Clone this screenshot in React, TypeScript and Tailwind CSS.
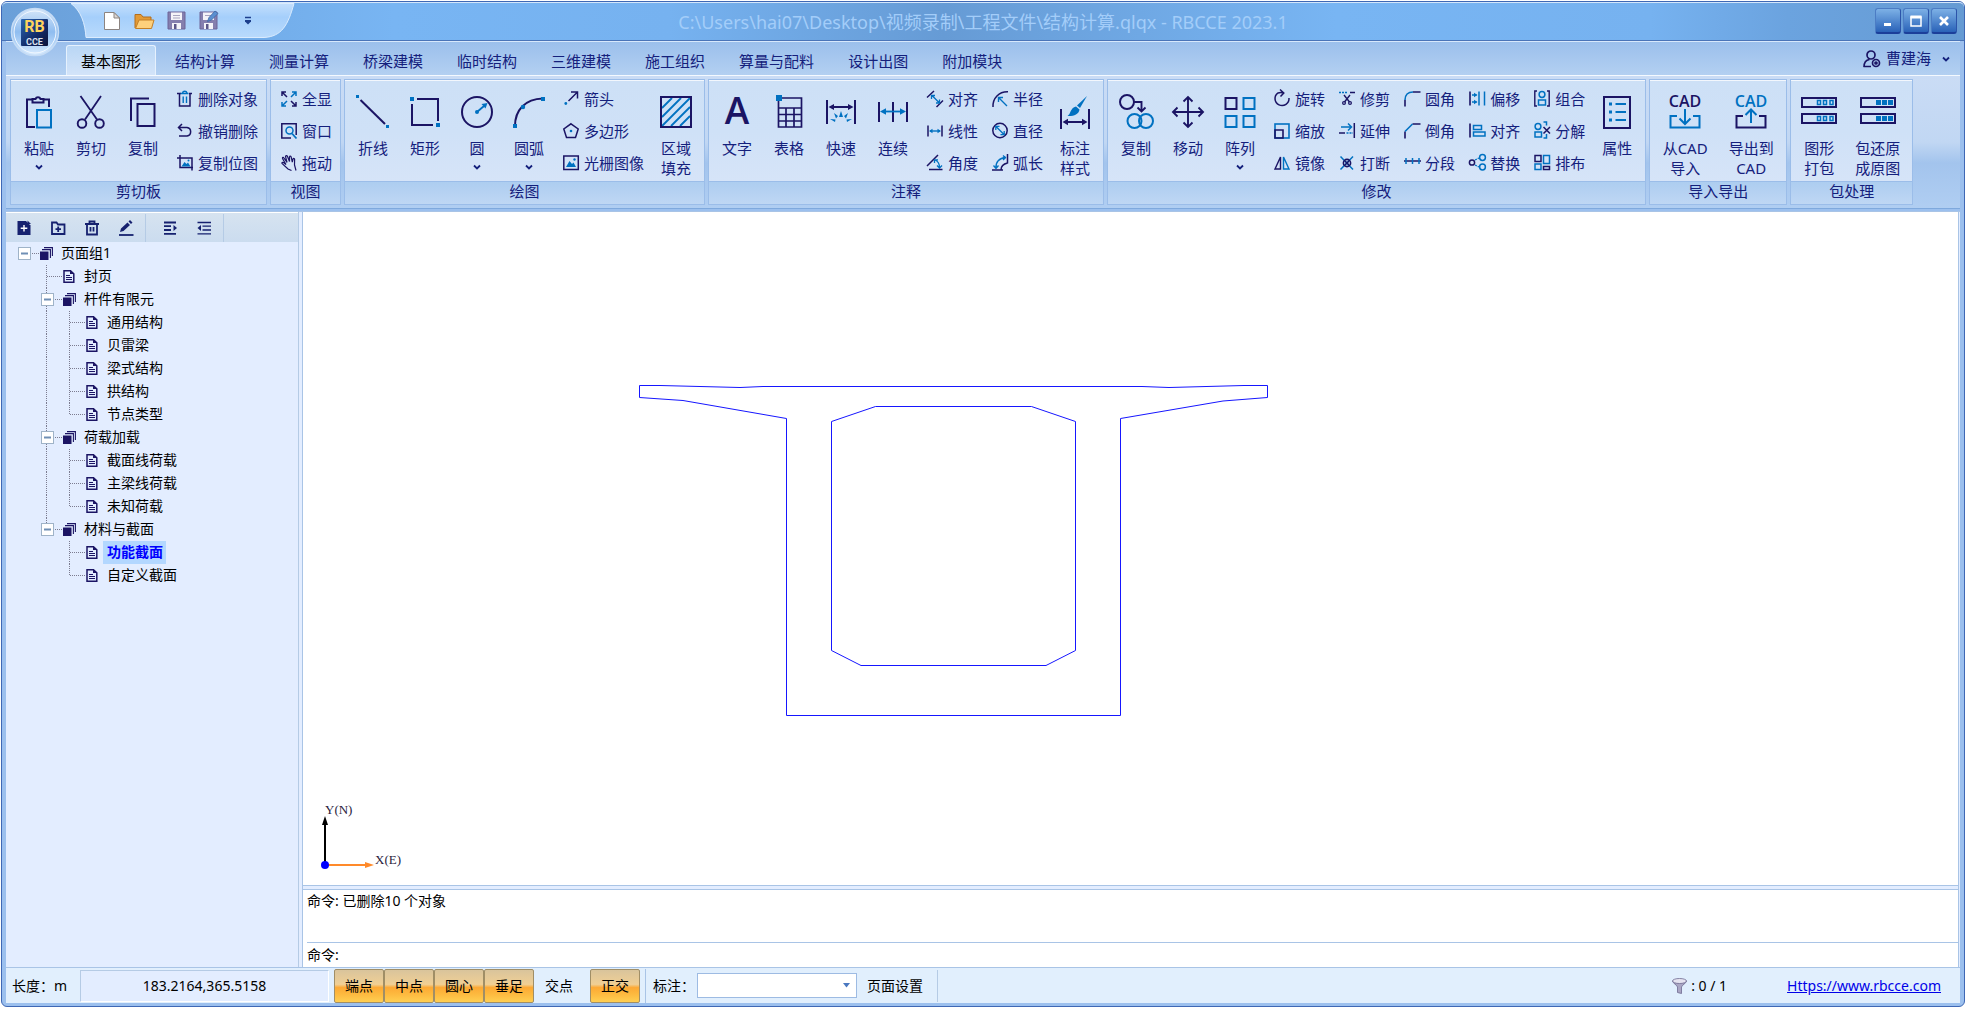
import { useState } from "react";
import type { ReactNode } from "react";

const D = "#1b1464";
const B = "#0071c1";

type IconMap = Record<string, ReactNode>;

/* 32 x 32 icons of the large ribbon buttons */
const bigIcons: IconMap = {
    paste: (
        <>
            <path d="M12 31H4V3.5H9M21 3.5H26V11" stroke={D} strokeWidth="2" />
            <path d="M9.500 6.500V3H12.500A2.700 2.700 0 0 1 17.500 3H20.500V6.500Z" stroke={D} strokeWidth="2" />
            <rect x="14" y="14" width="14" height="17.500" stroke={B} strokeWidth="2" />
        </>
    ),
    cut: (
        <>
            <path d="M5.500 0L22 23.500M26 0L10 23.500" stroke={D} strokeWidth="1.800" />
            <circle cx="7" cy="27.500" r="4.300" stroke={D} strokeWidth="1.900" />
            <circle cx="24.500" cy="27.500" r="4.300" stroke={D} strokeWidth="1.900" />
        </>
    ),
    copy: (
        <>
            <path d="M4 25V2.500H22" stroke={D} strokeWidth="2" />
            <rect x="10.500" y="8" width="17" height="22" stroke={D} strokeWidth="2" />
        </>
    ),
    polyline: (
        <>
            <path d="M3.500 4L28 28" stroke={D} strokeWidth="2" />
            <path d="M-1 -1h3v3h-3zM29 29h3v3h-3z" fill={B} />
        </>
    ),
    rect: (
        <>
            <path d="M8 3H29V25M3 8V29H24" stroke={D} strokeWidth="2" />
            <path d="M1 1h4v4h-4zM27 27h4v4h-4z" fill={B} />
        </>
    ),
    circle: (
        <>
            <circle cx="16" cy="16" r="15" stroke={D} strokeWidth="2" />
            <circle cx="16" cy="16" r="2" fill={B} />
            <path d="M16 16L23 10" stroke={B} strokeWidth="1.800" />
            <path d="M26.500 7L24.500 12.500L20.500 8Z" fill={B} />
        </>
    ),
    arc: (
        <>
            <path d="M2 30C2 14 12 3 30 2.500" stroke={D} strokeWidth="2" />
            <path d="M0 28h4v4h-4zM28 1h4v4h-4z" fill={B} />
            <circle cx="10" cy="11" r="2.200" fill={B} />
        </>
    ),
    hatch: (
        <>
            <path d="M2 12L12 2M2 21L21 2M2 30L30 2M11 30L30 11M20 30L30 20" stroke={B} strokeWidth="1.800" />
            <rect x="1" y="1" width="30" height="30" stroke={D} strokeWidth="2" />
        </>
    ),
    text: (
        <text x="16" y="28" textAnchor="middle" fill={D} fontSize="37" fontWeight="600" fontFamily="'Open Sans'">A</text>
    ),
    table: (
        <>
            <path d="M5.500 2H28.500V31H5.500ZM5.500 12H28.500M5.500 18.500H28.500M5.500 25H28.500M13 12V31M21 12V31" stroke={D} strokeWidth="1.700" />
            <path d="M3 -1h6v6h-6z" fill={B} />
        </>
    ),
    quick: (
        <>
            <path d="M2 4V28M30 4V28M6 11H26" stroke={D} strokeWidth="2" />
            <path d="M3.500 11L9 8V14ZM28.500 11L23 8V14Z" fill={D} />
            <path d="M16 15L18 21H14ZM9 17L13 20L11 22.500ZM23 17L19 20L21 22.500ZM5 23L10.500 23.500L10 26ZM27 23L21.500 23.500L22 26Z" fill={B} />
        </>
    ),
    continuous: (
        <>
            <path d="M2 6V26M16 6V26M30 6V26" stroke={D} strokeWidth="2" />
            <path d="M6 15.500H26" stroke={B} strokeWidth="1.800" />
            <path d="M3 15.500L9 12.300V18.700ZM29 15.500L23 12.300V18.700Z" fill={B} />
        </>
    ),
    dimStyle: (
        <>
            <path d="M2 13V33M30 13V33M6 26H26" stroke={D} strokeWidth="2" />
            <path d="M3.500 26L9 22.800V29.200ZM28.500 26L23 22.800V29.200Z" fill={D} />
            <path d="M28 0L21 12L18 9.500Z" fill={B} />
            <path d="M17 10.500L20.500 13.500C20 18.500 14 20.500 8.500 20C12 18 11 12 17 10.500Z" fill={B} />
        </>
    ),
    copyTo: (
        <>
            <circle cx="7" cy="6" r="7" stroke={D} strokeWidth="2" />
            <path d="M14 6H21.500V14M17.500 11.500L21.500 15.500L25.500 11.500" stroke={D} strokeWidth="1.900" />
            <circle cx="14.500" cy="25" r="7" stroke={B} strokeWidth="2" />
            <circle cx="26" cy="25" r="7" stroke={B} strokeWidth="2" />
        </>
    ),
    move: (
        <path d="M16 1V31M1 16H31M11.500 5.500L16 1L20.500 5.500M11.500 26.500L16 31L20.500 26.500M5.500 11.500L1 16L5.500 20.500M26.500 11.500L31 16L26.500 20.500" stroke={D} strokeWidth="1.900" />
    ),
    array: (
        <>
            <rect x="1.500" y="2" width="11" height="11" stroke={D} strokeWidth="2" />
            <rect x="19.500" y="2" width="11" height="11" stroke={B} strokeWidth="2" />
            <rect x="1.500" y="20" width="11" height="11" stroke={B} strokeWidth="2" />
            <rect x="19.500" y="20" width="11" height="11" stroke={B} strokeWidth="2" />
        </>
    ),
    props: (
        <>
            <rect x="3" y="1" width="26" height="31" stroke={D} strokeWidth="2" />
            <path d="M14.500 8H25M14.500 16H25M14.500 24H25" stroke={B} strokeWidth="2" />
            <path d="M8 6.500h3v3h-3zM8 14.500h3v3h-3zM8 22.500h3v3h-3z" fill={B} />
        </>
    ),
    cadIn: (
        <>
            <text x="16" y="11" textAnchor="middle" fill={D} fontSize="16" fontWeight="600" fontFamily="'Open Sans'">CAD</text>
            <path d="M8 20H1.500V31.500H30.500V20H24M16 13V28M10.500 22.500L16 28L21.500 22.500" stroke={B} strokeWidth="2" />
        </>
    ),
    cadOut: (
        <>
            <text x="16" y="11" textAnchor="middle" fill={B} fontSize="16" fontWeight="600" fontFamily="'Open Sans'">CAD</text>
            <path d="M8 20H1.500V31.500H30.500V20H24" stroke={D} strokeWidth="2" />
            <path d="M16 27V13.500M10.500 19L16 13.500L21.500 19" stroke={B} strokeWidth="2" />
        </>
    ),
    pack: (
        <>
            <path d="M-1 2H33V11H-1ZM-1 18H33V27H-1Z" stroke={D} strokeWidth="2" />
            <path d="M14.500 4.500h3v4h-3zM20.500 4.500h3v4h-3zM27 4.500h3v4h-3zM14.500 20.500h3v4h-3zM20.500 20.500h3v4h-3zM27 20.500h3v4h-3z" stroke={B} strokeWidth="1.500" />
        </>
    ),
    unpack: (
        <>
            <path d="M-1 2H33V11H-1ZM-1 18H33V27H-1Z" stroke={D} strokeWidth="2" />
            <path d="M14 4h5v5h-5zM20 4h5v5h-5zM26 4h5v5h-5zM14 20h5v5h-5zM20 20h5v5h-5zM26 20h5v5h-5z" fill={B} />
        </>
    ),
};

/* 16 x 16 icons of the small ribbon buttons */
const smallIcons: IconMap = {
    trash: (
        <>
            <path d="M0 2.500H4M12 2.500H15M2.500 2.500V15H13V2.500" stroke={D} strokeWidth="1.500" />
            <path d="M3.500 2.500H11.500M5.500 2A2.300 2.300 0 0 1 10 2M6.200 5.500V12M9.500 5.500V12" stroke={B} strokeWidth="1.400" />
        </>
    ),
    undo: <path d="M5 1L1.500 4.500L5 8M1.500 4.500H10A4.300 4.300 0 0 1 10 13H2" stroke={D} strokeWidth="1.500" />,
    copyImage: (
        <>
            <path d="M3 0V12.500H16M0 3H15V15.500" stroke={D} strokeWidth="1.500" />
            <path d="M4.500 11.500L7.500 7L9.500 9L11 7.500L13.500 11.500Z" fill={B} />
            <circle cx="11.500" cy="5.500" r="1" fill={B} />
        </>
    ),
    fitAll: (
        <>
            <path d="M1 5V1H5M1 1L6 6M15 11V15H11M15 15L10 10" stroke={D} strokeWidth="1.500" />
            <path d="M11 1H15V5M15 1L10 6M1 11V15H5M1 15L6 10" stroke={B} strokeWidth="1.500" />
        </>
    ),
    zoomWin: (
        <>
            <path d="M15.200 12V0.800H0.800V15H10" stroke={D} strokeWidth="1.500" />
            <circle cx="8.500" cy="7.500" r="3.500" stroke={B} strokeWidth="1.500" />
            <path d="M11 10.500L15.500 15.500" stroke={B} strokeWidth="1.800" />
        </>
    ),
    pan: <path d="M10.500 15.500L7 14L1 8.500C0.500 7.500 1.500 7 2.500 7.500L5 9.500L1.500 3.500C1.200 2.300 2.500 2 3 3L6 7.500L4.500 1.500C4.500 0.500 6 0.300 6.500 1.500L8.500 6.500L8.500 1.800C8.800 0.800 10 1 10.200 2L11.300 7L12 4C12.500 3 13.700 3.500 13.600 4.500L13.500 10L15 15.500" stroke={D} strokeWidth="1.200" />,
    arrow: (
        <>
            <path d="M5.500 10L14.500 1M8 1H14.500V7.500" stroke={D} strokeWidth="1.500" />
            <circle cx="2.800" cy="12.500" r="1.400" fill={B} />
        </>
    ),
    polygon: (
        <>
            <path d="M8 0.800L15.200 6L12.500 14.500H3.500L0.800 6Z" stroke={D} strokeWidth="1.500" />
            <circle cx="8" cy="8" r="1.300" fill={B} />
        </>
    ),
    raster: (
        <>
            <rect x="0.800" y="1" width="14.500" height="13.500" stroke={D} strokeWidth="1.500" />
            <path d="M3 12L6.500 6L9 9L10.500 7.500L13 12Z" fill={B} />
            <circle cx="11.500" cy="4.500" r="1.200" fill={B} />
        </>
    ),
    dimAligned: (
        <>
            <path d="M0 6.500L7 0M9.500 16L16 9.500" stroke={D} strokeWidth="1.500" />
            <path d="M5 4.500L12 11.500M4.500 8V4.500H8M12.500 8.500V12H9" stroke={B} strokeWidth="1.300" />
        </>
    ),
    dimLinear: (
        <>
            <path d="M1 2.500V13.500M15 2.500V13.500" stroke={D} strokeWidth="1.500" />
            <path d="M3 8H13" stroke={B} strokeWidth="1.400" />
            <path d="M2 8L5.500 5.800V10.200ZM14 8L10.500 5.800V10.200Z" fill={B} />
        </>
    ),
    dimAngle: (
        <>
            <path d="M0 11L11 0M2 14.500H15.500" stroke={D} strokeWidth="1.500" />
            <path d="M8 5C11.500 6.500 12.500 9 12.500 12.500M7.500 8V4.800H11M10 10.500L12.500 13L15 10.500" stroke={B} strokeWidth="1.300" />
        </>
    ),
    radius: (
        <>
            <path d="M1 16C0.500 7 7 0.500 16 0.800" stroke={D} strokeWidth="1.500" />
            <path d="M15 15L6.500 6.500M6.500 11V6.500H11" stroke={B} strokeWidth="1.400" />
        </>
    ),
    diameter: (
        <>
            <circle cx="8" cy="7.500" r="7.200" stroke={D} strokeWidth="1.500" />
            <path d="M4 3.500L12 11.500M3.800 7V3.400H7.500M12.200 8V11.700H8.500" stroke={B} strokeWidth="1.300" />
        </>
    ),
    arcLength: (
        <>
            <path d="M0 15H11M15.500 -1V8.500M9 15C9 11.500 11 9 15.500 8" stroke={D} strokeWidth="1.500" />
            <path d="M4 13C3.500 7 7 3 14 2.500M11 0.500L13.500 2.800L11 5M1.500 10.500L4 13.500L6.500 10.500" stroke={B} strokeWidth="1.300" />
        </>
    ),
    rotate: <path d="M4 1.800A7 7 0 1 0 15 7M4 2C6 1.300 8 1.500 9.500 2M6 -1.500L9.800 2L6.500 5.500" stroke={D} strokeWidth="1.500" />,
    scale: (
        <>
            <rect x="1" y="1" width="14" height="14" stroke={B} strokeWidth="1.600" />
            <path d="M1 7V15H9V7Z" stroke={D} strokeWidth="1.600" />
        </>
    ),
    mirror: (
        <>
            <path d="M6.500 2V14H1Z" stroke={D} strokeWidth="1.400" />
            <path d="M9.500 2V14H15Z" stroke={B} strokeWidth="1.400" />
        </>
    ),
    trim: (
        <>
            <path d="M0 1.500H9" stroke={B} strokeWidth="1.500" strokeDasharray="2 1" />
            <path d="M11 1.500H16M5 4L10.500 11M11 4L5.500 11" stroke={D} strokeWidth="1.400" />
            <circle cx="5" cy="12" r="1.400" stroke={D} strokeWidth="1.200" />
            <circle cx="11" cy="12" r="1.400" stroke={D} strokeWidth="1.200" />
        </>
    ),
    extend: (
        <>
            <path d="M2 4H12M9 0.500L12.500 4L9 7.500" stroke={B} strokeWidth="1.500" />
            <path d="M7.500 10H14" stroke={B} strokeWidth="1.500" strokeDasharray="2 1" />
            <path d="M15.300 0V15M0 10H6" stroke={D} strokeWidth="1.500" />
        </>
    ),
    breakAt: (
        <>
            <path d="M1.500 1.500L14 14.500M14 1.500L1.500 14.500" stroke={B} strokeWidth="1.500" />
            <circle cx="8" cy="8" r="3.600" stroke={D} strokeWidth="1.600" />
            <path d="M6 6L10 10M10 6L6 10" stroke={D} strokeWidth="1.300" />
        </>
    ),
    fillet: (
        <>
            <path d="M1 15.500V9M9 1H16.500" stroke={D} strokeWidth="1.600" />
            <path d="M1 9C1 4 4 1 9 1" stroke={B} strokeWidth="1.600" />
        </>
    ),
    chamfer: (
        <>
            <path d="M1 15.500V8.500M8.500 1H16.500" stroke={D} strokeWidth="1.600" />
            <path d="M1 8.500L8.500 1" stroke={B} strokeWidth="1.600" />
        </>
    ),
    divide: (
        <>
            <path d="M0 6H17" stroke={D} strokeWidth="1.500" />
            <path d="M2 3V9M8.500 3V9M15 3V9" stroke={B} strokeWidth="1.500" />
        </>
    ),
    offset: (
        <>
            <path d="M1 0.500V14.500" stroke={D} strokeWidth="1.600" />
            <path d="M10 0.500V14.500M15.500 0.500V14.500M3 4H7.500M3 11H7.500" stroke={B} strokeWidth="1.500" />
            <path d="M5 1.800L8.500 4L5 6.200ZM5 8.800L8.500 11L5 13.200Z" fill={B} />
        </>
    ),
    align: (
        <>
            <path d="M1 0.500V14.500" stroke={D} strokeWidth="1.600" />
            <path d="M4.500 2.500H12.500V6.500H4.500ZM4.500 9H16V13H4.500Z" stroke={B} strokeWidth="1.500" />
        </>
    ),
    replace: (
        <>
            <circle cx="3" cy="7.500" r="2.600" stroke={D} strokeWidth="1.500" />
            <circle cx="13.500" cy="2.500" r="2.900" stroke={B} strokeWidth="1.500" />
            <circle cx="13.500" cy="12" r="2.900" stroke={B} strokeWidth="1.500" />
            <path d="M6 5L10 3M6 10L10 12" stroke={B} strokeWidth="1.300" strokeDasharray="2 1" />
        </>
    ),
    group: (
        <>
            <path d="M3 0H0.800V15H3M13 0H15.200V15H13" stroke={D} strokeWidth="1.400" />
            <circle cx="8" cy="3.500" r="2.900" stroke={B} strokeWidth="1.500" />
            <rect x="4.500" y="9" width="7" height="5" stroke={B} strokeWidth="1.500" />
        </>
    ),
    ungroup: (
        <>
            <circle cx="4" cy="3.500" r="2.900" stroke={B} strokeWidth="1.500" />
            <rect x="1" y="9" width="6.500" height="5" stroke={B} strokeWidth="1.500" />
            <path d="M9.500 -1H12.500V2.500M9.500 15H12.500V11" stroke={B} strokeWidth="1.500" />
            <path d="M9.500 4L16 10.500M16 4L9.500 10.500" stroke={D} strokeWidth="1.500" />
        </>
    ),
    layout: (
        <>
            <path d="M1 0.500H7V6.500H1ZM9.500 11.500H15.500V14.500H9.500Z" stroke={D} strokeWidth="1.500" />
            <path d="M9.500 0.500H15.500V8.500H9.500ZM1 9H7V14.500H1Z" stroke={B} strokeWidth="1.500" />
        </>
    ),
};

interface BigItem {
    icon: string;
    lines: string[];
    arrow?: boolean;
    width?: string;
}
type SmallItem = [icon: string, label: string];
interface Group {
    title: string;
    before: BigItem[];
    columns: SmallItem[][];
    after: BigItem[];
}

const groups: Group[] = [
    {
        title: "剪切板",
        before: [
            { icon: "paste", lines: ["粘贴"], arrow: true },
            { icon: "cut", lines: ["剪切"] },
            { icon: "copy", lines: ["复制"] },
        ],
        columns: [[["trash", "删除对象"], ["undo", "撤销删除"], ["copyImage", "复制位图"]]],
        after: [],
    },
    {
        title: "视图",
        before: [],
        columns: [[["fitAll", "全显"], ["zoomWin", "窗口"], ["pan", "拖动"]]],
        after: [],
    },
    {
        title: "绘图",
        before: [
            { icon: "polyline", lines: ["折线"] },
            { icon: "rect", lines: ["矩形"] },
            { icon: "circle", lines: ["圆"], arrow: true },
            { icon: "arc", lines: ["圆弧"], arrow: true },
        ],
        columns: [[["arrow", "箭头"], ["polygon", "多边形"], ["raster", "光栅图像"]]],
        after: [{ icon: "hatch", lines: ["区域", "填充"] }],
    },
    {
        title: "注释",
        before: [
            { icon: "text", lines: ["文字"] },
            { icon: "table", lines: ["表格"] },
            { icon: "quick", lines: ["快速"] },
            { icon: "continuous", lines: ["连续"] },
        ],
        columns: [
            [["dimAligned", "对齐"], ["dimLinear", "线性"], ["dimAngle", "角度"]],
            [["radius", "半径"], ["diameter", "直径"], ["arcLength", "弧长"]],
        ],
        after: [{ icon: "dimStyle", lines: ["标注", "样式"] }],
    },
    {
        title: "修改",
        before: [
            { icon: "copyTo", lines: ["复制"] },
            { icon: "move", lines: ["移动"] },
            { icon: "array", lines: ["阵列"], arrow: true },
        ],
        columns: [
            [["rotate", "旋转"], ["scale", "缩放"], ["mirror", "镜像"]],
            [["trim", "修剪"], ["extend", "延伸"], ["breakAt", "打断"]],
            [["fillet", "圆角"], ["chamfer", "倒角"], ["divide", "分段"]],
            [["offset", "偏移"], ["align", "对齐"], ["replace", "替换"]],
            [["group", "组合"], ["ungroup", "分解"], ["layout", "排布"]],
        ],
        after: [{ icon: "props", lines: ["属性"] }],
    },
    {
        title: "导入导出",
        before: [
            { icon: "cadIn", lines: ["从CAD", "导入"], width: "w-[66px]" },
            { icon: "cadOut", lines: ["导出到", "CAD"], width: "w-[66px]" },
        ],
        columns: [],
        after: [],
    },
    {
        title: "包处理",
        before: [
            { icon: "pack", lines: ["图形", "打包"] },
            { icon: "unpack", lines: ["包还原", "成原图"], width: "w-[65px]" },
        ],
        columns: [],
        after: [],
    },
];

const tabs = ["基本图形", "结构计算", "测量计算", "桥梁建模", "临时结构", "三维建模", "施工组织", "算量与配料", "设计出图", "附加模块"];

interface TreeNode {
    label: string;
    children?: TreeNode[];
}

const pageTree: TreeNode[] = [
    { label: "封页" },
    {
        label: "杆件有限元",
        children: [{ label: "通用结构" }, { label: "贝雷梁" }, { label: "梁式结构" }, { label: "拱结构" }, { label: "节点类型" }],
    },
    {
        label: "荷载加载",
        children: [{ label: "截面线荷载" }, { label: "主梁线荷载" }, { label: "未知荷载" }],
    },
    {
        label: "材料与截面",
        children: [{ label: "功能截面" }, { label: "自定义截面" }],
    },
];

function Chevron() {
    return (
        <svg width="8" height="6" viewBox="0 0 8 6" fill="none">
            <path d="M1 1.500L4 4.500L7 1.500" stroke="#14207c" strokeWidth="1.800" />
        </svg>
    );
}

function BigButton({ item }: { item: BigItem }) {
    return (
        <button className={`${item.width ?? "w-[52px]"} shrink-0 flex flex-col items-center pt-[15px]`}>
            <svg width="32" height="32" viewBox="0 0 32 32" fill="none" className="overflow-visible mb-2.5 shrink-0">
                {bigIcons[item.icon]}
            </svg>
            {item.lines.map((line) => (
                <span key={line} className="leading-5 whitespace-nowrap">{line}</span>
            ))}
            {item.arrow && (
                <span className="pt-1.5"><Chevron /></span>
            )}
        </button>
    );
}

function RibbonGroup({ group }: { group: Group }) {
    return (
        <section className="shrink-0 flex flex-col border border-[#9bbde9] bg-[#cfe1f6]/80">
            <div className="flex h-[101px] px-0.5 border-t border-white/70 bg-linear-to-b from-[#cde0f6] via-[#cfe1f7] to-[#d6e4f8]">
                {group.before.map((item) => <BigButton key={item.icon} item={item} />)}
                {group.columns.map((column) => (
                    <div key={column[0][0]} className="flex flex-col pt-0.5 pl-2 pr-1.5">
                        {column.map(([icon, label]) => (
                            <button key={icon} className="h-8 flex items-center gap-[5px] whitespace-nowrap">
                                <svg width="16" height="16" viewBox="0 0 16 16" fill="none" className="overflow-visible">
                                    {smallIcons[icon]}
                                </svg>
                                {label}
                            </button>
                        ))}
                    </div>
                ))}
                {group.after.map((item) => <BigButton key={item.icon} item={item} />)}
            </div>
            <h2 className="h-[23px] pb-[3px] flex items-center justify-center border-t border-[#9bbde9] bg-linear-to-b from-[#adcdf0] to-[#bfd7f4]">
                {group.title}
            </h2>
        </section>
    );
}

function AppLogo() {
    return (
        <button aria-label="RBCCE" className="absolute left-2 top-[5px] z-10">
            <svg width="50" height="50" viewBox="0 0 50 50">
                <defs>
                    <linearGradient id="orb" x1="0" y1="0" x2="0" y2="1">
                        <stop offset="0" stopColor="#d7e7f9" />
                        <stop offset="0.500" stopColor="#8fbdf0" />
                        <stop offset="1" stopColor="#d9ecff" />
                    </linearGradient>
                    <linearGradient id="tile" x1="0" y1="0" x2="1" y2="1">
                        <stop offset="0" stopColor="#2a66b4" />
                        <stop offset="0.600" stopColor="#122a66" />
                        <stop offset="1" stopColor="#0c1238" />
                    </linearGradient>
                </defs>
                <circle cx="25" cy="25" r="23.500" fill="url(#orb)" stroke="#c6dcf5" strokeWidth="1.500" />
                <circle cx="25" cy="25" r="21" fill="none" stroke="#f2f8ff" strokeWidth="1" />
                <rect x="11" y="12" width="27" height="27" rx="1" fill="url(#tile)" />
                <text x="24.500" y="25" textAnchor="middle" fontSize="16" fontWeight="700" fill="#ffd45e" fontFamily="Roboto">RB</text>
                <text x="24.500" y="38" textAnchor="middle" fontSize="9" fontWeight="700" fill="#dfe3ee" fontFamily="Roboto">CCE</text>
            </svg>
        </button>
    );
}

function QuickAccess() {
    return (
        <div className="relative w-[226px] h-[35px] ml-[68px] flex items-center">
            <svg width="226" height="35" viewBox="0 0 226 35" className="absolute left-0 top-0">
                <defs>
                    <linearGradient id="qat" x1="0" y1="0" x2="0" y2="1">
                        <stop offset="0" stopColor="#c4dffc" />
                        <stop offset="0.400" stopColor="#a5cffb" />
                        <stop offset="1" stopColor="#b9dafc" />
                    </linearGradient>
                </defs>
                <path d="M1 0.500H224C218 22 212 33.500 194 34.500H16C15 20 11 8 1 0.500Z" fill="url(#qat)" stroke="#dbecfe" />
            </svg>
            <div className="relative flex items-center pl-[33px]">
                <button aria-label="新建" className="w-[31px]">
                    <svg width="18" height="20" viewBox="0 0 18 20">
                        <path d="M1.500 1.500H11L16.500 7V18.500H1.500Z" fill="#fff" stroke="#8c8480" />
                        <path d="M11 1.500V7H16.500Z" fill="#ddd8d4" stroke="#8c8480" />
                    </svg>
                </button>
                <button aria-label="打开" className="w-[33px]">
                    <svg width="21" height="18" viewBox="0 0 21 18">
                        <path d="M1 16V2.500H7L9 5H17V9" fill="#e39a35" stroke="#b36d1c" />
                        <path d="M1.500 16.500L5 8H20L17.500 16.500Z" fill="#fdd07c" stroke="#c37f26" />
                    </svg>
                </button>
                <button aria-label="保存" className="w-8">
                    <svg width="19" height="19" viewBox="0 0 19 19">
                        <path d="M1 1H18V18H1Z" fill="#857fae" stroke="#6c6598" />
                        <path d="M4 1.500H15V9H4Z" fill="#f4f3f8" />
                        <path d="M6 4.500H13M6 7H13" stroke="#a7a3bf" />
                        <path d="M5 12H14V18H5Z" fill="#f4f3f8" />
                        <path d="M7 13H9.500V18H7Z" fill="#5d5789" />
                    </svg>
                </button>
                <button aria-label="另存为" className="w-[41px]">
                    <svg width="20" height="19" viewBox="0 0 20 19" className="overflow-visible">
                        <path d="M1 1H18V18H1Z" fill="#857fae" stroke="#6c6598" />
                        <path d="M4 1.500H15V9H4Z" fill="#f4f3f8" />
                        <path d="M6 4.500H13" stroke="#a7a3bf" />
                        <path d="M5 12H14V18H5Z" fill="#f4f3f8" />
                        <path d="M7 13H9.500V18H7Z" fill="#5d5789" />
                        <path d="M8.500 10.500L10 6.500L16 0L19 2.500L12.500 9Z" fill="#5b8fd0" stroke="#3e67a3" strokeWidth="0.800" />
                    </svg>
                </button>
                <button aria-label="自定义" className="pl-1">
                    <svg width="8" height="10" viewBox="0 0 8 10" fill="none">
                        <path d="M1 1.500H7" stroke="#1d3f8c" strokeWidth="1.500" />
                        <path d="M1 4H7V5.500L4 8.500L1 5.500Z" fill="#1d3f8c" />
                    </svg>
                </button>
            </div>
        </div>
    );
}

function WindowButton({ label, children }: { label: string; children: ReactNode }) {
    return (
        <button
            aria-label={label}
            className="w-[26px] h-[26px] rounded-[3px] flex items-center justify-center border border-[#4c7cc4] border-b-[#1b3f9a] border-b-2 border-r-[#2c54aa] bg-linear-to-b from-[#7db1e6] to-[#2a62b8]"
        >
            <svg width="14" height="14" viewBox="0 0 14 14" fill="none">{children}</svg>
        </button>
    );
}

function TitleBar() {
    return (
        <header className="h-[39px] shrink-0 grid grid-cols-[1fr_auto_1fr] rounded-t-[5px] border-t border-t-[#d3e6fb] border-b border-b-[#4a74b8] bg-[linear-gradient(90deg,#6a9fd8_0%,#78b5f3_20%,#76b2f0_34%,#669bd5_48%,#78b5f3_68%,#76b2f0_84%,#6ba3df_91%,#669bd3_100%)]">
            <QuickAccess />
            <h1 className="self-center text-lg leading-6 text-[#a3cdf9] whitespace-nowrap">
                C:\Users\hai07\Desktop\视频录制\工程文件\结构计算.qlqx - RBCCE 2023.1
            </h1>
            <div className="flex justify-end gap-0.5 pt-[5px] pr-[7px]">
                <WindowButton label="最小化"><path d="M3 10.500H10" stroke="#fff" strokeWidth="3" /></WindowButton>
                <WindowButton label="最大化">
                    <path d="M2 3H12V12H2Z" stroke="#fff" strokeWidth="1.500" />
                    <path d="M1.500 3H12.500" stroke="#fff" strokeWidth="3" />
                </WindowButton>
                <WindowButton label="关闭"><path d="M3 3L11 11M11 3L3 11" stroke="#fff" strokeWidth="2.600" /></WindowButton>
            </div>
        </header>
    );
}

function TabBar() {
    const [active, setActive] = useState(tabs[0]);

    return (
        <div className="h-[34px] shrink-0 flex items-end justify-between border-t border-[#d7e8fc] bg-linear-to-b from-[#9bbfec] to-[#b3d0f1]">
            <nav className="flex gap-1 pl-[60px]">
                {tabs.map((tab) => (
                    <button
                        key={tab}
                        onClick={() => setActive(tab)}
                        className={`h-[30px] px-[14px] pt-0.5 border border-b-0 rounded-t-[3px] ${
                            tab === active
                                ? "border-[#e6f1fd] bg-linear-to-b from-[#b9d6f5] to-[#d3e4f9] text-black"
                                : "border-transparent"
                        }`}
                    >
                        {tab}
                    </button>
                ))}
            </nav>
            <button className="self-center h-6 flex items-center gap-[5px] pr-2.5">
                <svg width="18" height="18" viewBox="0 0 18 18" fill="none" stroke={D} strokeWidth="1.700">
                    <circle cx="8" cy="5" r="4" />
                    <path d="M1 17C1 12.500 3 10 6.500 9.500M0.500 16.500H8" />
                    <circle cx="13" cy="13" r="3.500" />
                    <circle cx="13" cy="13" r="1" />
                </svg>
                曹建海
                <span className="pl-[6px]"><Chevron /></span>
            </button>
        </div>
    );
}

function Ribbon() {
    return (
        <div className="shrink-0 flex gap-[3px] pt-[3px] pb-[3px] pl-1 border-t border-t-[#f4f9ff] border-b border-b-[#7fa9dd] bg-[linear-gradient(180deg,#cadcf5_0%,#c1d7f3_50%,#a3c4ed_66%,#b0cef2_100%)]">
            {groups.map((group) => <RibbonGroup key={group.title} group={group} />)}
        </div>
    );
}

function StackIcon() {
    return (
        <svg width="13" height="13" viewBox="0 0 13 13" fill="none">
            <path d="M4 0.600H12.400V9" stroke={D} strokeWidth="1.100" />
            <path d="M2 2.600H10.400V11" stroke={D} strokeWidth="1.100" />
            <rect x="0" y="4.500" width="8.500" height="8.500" fill={D} />
        </svg>
    );
}

function PageIcon() {
    return (
        <svg width="12" height="13" viewBox="0 0 12 13" fill="none">
            <path d="M1 0.800H7.500L10.800 3.800V12.200H1Z" stroke={D} strokeWidth="1.500" />
            <path d="M7 0.500V4H11Z" fill={D} />
            <path d="M3 5.500H7M3 7.500H9M3 9.500H9" stroke={D} strokeWidth="1" />
        </svg>
    );
}

/* one cell of the dotted connector lines */
function Guide({ trunk, branch, box }: { trunk?: "full" | "half"; branch?: boolean; box?: boolean }) {
    return (
        <svg width="22" height="23" viewBox="0 0 22 23" fill="none" className="shrink-0">
            {trunk && <path d={trunk === "full" ? "M5.500 0V23" : "M5.500 0V12"} stroke="#7c7c90" strokeDasharray="1 1" />}
            {branch && <path d="M6 11.500H22" stroke="#7c7c90" strokeDasharray="1 1" />}
            {box && (
                <>
                    <rect x="0.500" y="5.500" width="12" height="12" fill="#fff" stroke="#9fb3c8" />
                    <path d="M3 11.500H10" stroke="#6f8fb5" strokeWidth="2" />
                </>
            )}
        </svg>
    );
}

function Tree() {
    const [selected, setSelected] = useState("功能截面");

    function label(text: string) {
        return (
            <button
                onClick={() => setSelected(text)}
                className={`h-[23px] pl-1 pr-[3px] pb-0.5 whitespace-nowrap ${text === selected ? "bg-[#b3d7ff] text-[#0000ff] font-bold" : ""}`}
            >
                {text}
            </button>
        );
    }

    return (
        <div className="pl-3 text-sm text-black">
            <div className="h-[23px] flex items-center">
                <Guide branch box />
                <span className="w-[17px]"><StackIcon /></span>
                {label("页面组1")}
            </div>
            <ul>
                {pageTree.map((node, i) => {
                    const last = i === pageTree.length - 1;
                    return (
                        <li key={node.label}>
                            <div className="h-[23px] flex items-center pl-[23px]">
                                <Guide trunk={last ? "half" : "full"} branch box={!!node.children} />
                                <span className="w-[17px]">{node.children ? <StackIcon /> : <PageIcon />}</span>
                                {label(node.label)}
                            </div>
                            {node.children && (
                                <ul>
                                    {node.children.map((child, j) => (
                                        <li key={child.label} className="h-[23px] flex items-center pl-[23px]">
                                            <span className="w-[23px]"><Guide trunk={last ? undefined : "full"} /></span>
                                            <Guide trunk={j === node.children!.length - 1 ? "half" : "full"} branch />
                                            <span className="w-[17px]"><PageIcon /></span>
                                            {label(child.label)}
                                        </li>
                                    ))}
                                </ul>
                            )}
                        </li>
                    );
                })}
            </ul>
        </div>
    );
}

function ToolButton({ label, children }: { label: string; children: ReactNode }) {
    return (
        <button aria-label={label} className="w-[34px] flex items-center justify-center">
            <svg width="16" height="16" viewBox="0 0 16 16" fill="none" stroke="#16216f" strokeWidth="1.800">{children}</svg>
        </button>
    );
}

function Sidebar() {
    return (
        <aside className="w-[293px] shrink-0 border-r border-[#b5cbe5] bg-[#e3edff]">
            <div className="h-[30px] flex pt-px border-t border-white bg-linear-to-b from-[#d6e3f0] to-[#cbdcef]">
                <div className="flex pl-px pr-[2px] border-r border-[#b5cbe5]">
                    <ToolButton label="新建页面">
                        <path d="M1.500 1H10L14.500 5.500V15H1.500Z" fill="#16216f" stroke="none" />
                        <path d="M11.500 0.500L15 4H11.500Z" fill="#16216f" stroke="none" />
                        <path d="M8 5V11.500M4.700 8.200H11.300" stroke="#fff" strokeWidth="1.400" />
                    </ToolButton>
                    <ToolButton label="新建页面组">
                        <path d="M2 2.500H6.500L8 4.500H14.500V14H2Z" />
                        <path d="M8.200 6.500V12M5.500 9.200H11" />
                    </ToolButton>
                    <ToolButton label="删除">
                        <path d="M1 4H15M3 4V14.500H13V4M5.500 3.500V1.500H10.500V3.500M6.500 7V11.500M9.500 7V11.500" />
                    </ToolButton>
                    <ToolButton label="重命名">
                        <path d="M2 12L3 8.500L9.500 2.500L12 5L5.500 11ZM10.500 1.500L12 0L14.500 2.500L13 4Z" fill="#16216f" stroke="none" />
                        <path d="M1 15H15.500" />
                    </ToolButton>
                </div>
                <div className="flex pl-[7px] pr-[2px] border-r border-[#b5cbe5]">
                    <ToolButton label="全部展开">
                        <path d="M2 2.500H14M2 6.200H9M2 10H9M2 13.800H14" />
                        <path d="M11.500 5L15 8L11.500 11Z" fill="#16216f" stroke="none" />
                    </ToolButton>
                    <ToolButton label="全部折叠">
                        <path d="M1.500 2.500H15M6.500 6.200H15M6.500 10H15M1.500 13.800H15" strokeWidth="1.300" />
                        <path d="M5 5L1.500 8L5 11Z" fill="#16216f" stroke="none" />
                    </ToolButton>
                </div>
            </div>
            <Tree />
        </aside>
    );
}

function Canvas() {
    return (
        <div className="relative flex-1 min-h-[560px] border-b border-[#a9c4e6] bg-white">
            {/* box girder section */}
            <svg className="absolute inset-0 w-full h-full" fill="none" stroke="#1616ff">
                <path d="M336.500 173.500H357L437 175.500L460 174.500H839L866 175.500L941 173.500H964.500V185.500L920 189L817.500 206.500V503.500H483.500V206.500L380 188.500L336.500 185.500Z" />
                <path d="M572.500 194.500H728.500L772.500 209.500V438.500L743 453.500H558L528.500 438.500V209.500Z" />
            </svg>
            {/* coordinate axes */}
            <svg width="90" height="80" viewBox="0 0 90 80" className="absolute left-[15px] bottom-2.5 overflow-visible">
                <path d="M7 70V26" stroke="#000" strokeWidth="2" />
                <path d="M7 21L10 30H4Z" fill="#000" />
                <path d="M7 70H50" stroke="#ff8a2a" strokeWidth="2" />
                <path d="M56 70L47 67V73Z" fill="#ff8a2a" />
                <circle cx="7" cy="70" r="4" fill="#0000ff" />
                <text x="7" y="19" fontSize="13" fontFamily="'Liberation Serif'" fill="#2a1c3c">Y(N)</text>
                <text x="57" y="69" fontSize="13" fontFamily="'Liberation Serif'" fill="#2a1c3c">X(E)</text>
            </svg>
        </div>
    );
}

function CommandPanel() {
    return (
        <div className="shrink-0 mt-[3px] border-t border-[#a9c4e6] bg-white pl-1 text-sm text-black">
            <p className="h-[52px] pt-px leading-5">命令: 已删除10 个对象</p>
            <div className="h-[25px] flex items-center gap-1 border-t border-[#a9c4e6]">
                <label htmlFor="command">命令:</label>
                <input id="command" className="flex-1 min-w-0 h-5 outline-none bg-transparent" />
            </div>
        </div>
    );
}

function SnapButton({ label, on, onClick }: { label: string; on: boolean; onClick: () => void }) {
    return (
        <button
            onClick={onClick}
            aria-pressed={on}
            className={`w-[50px] h-[34px] rounded-[2px] border ${
                on
                    ? "border-[#a08e66] bg-[linear-gradient(180deg,#d9c49c_0%,#f0cf94_45%,#fca935_55%,#fdb93f_75%,#ffcf52_100%)]"
                    : "border-transparent"
            }`}
        >
            {label}
        </button>
    );
}

function StatusBar() {
    const [snaps, setSnaps] = useState(["端点", "中点", "圆心", "垂足", "正交"]);

    function toggle(name: string) {
        setSnaps(snaps.includes(name) ? snaps.filter((s) => s !== name) : [...snaps, name]);
    }

    return (
        <footer className="h-9 shrink-0 flex items-center border-t border-[#a9c4e6] bg-[#e1effd] text-sm text-black">
            <span className="w-[74px] pl-1.5 whitespace-nowrap">长度：m</span>
            <output className="w-[249px] h-8 flex items-center justify-center border border-[#b5cbe5] border-r-white border-b-white bg-[#e3edff]">
                183.2164,365.5158
            </output>
            <div className="flex pl-[5px]">
                {["端点", "中点", "圆心", "垂足", "交点"].map((name) => (
                    <SnapButton key={name} label={name} on={snaps.includes(name)} onClick={() => toggle(name)} />
                ))}
            </div>
            <div className="pl-1.5 pr-[5px] border-r border-[#a9c4e6]">
                <SnapButton label="正交" on={snaps.includes("正交")} onClick={() => toggle("正交")} />
            </div>
            <label htmlFor="dim-style" className="w-[51px] pl-[7px] whitespace-nowrap">标注：</label>
            <div className="relative">
                <select id="dim-style" className="w-[160px] h-[25px] block appearance-none border border-[#9dbbe3] bg-white" />
                <svg width="7" height="5" viewBox="0 0 7 5" className="absolute right-[7px] top-[10px] pointer-events-none">
                    <path d="M0 0H7L3.500 4.500Z" fill="#4a78c0" />
                </svg>
            </div>
            <button className="h-8 pl-2.5 pr-3.5 border-r border-[#b5cbe5]">页面设置</button>
            <div className="ml-auto flex items-center gap-1">
                <svg width="15" height="16" viewBox="0 0 15 16">
                    <path d="M0.500 3C0.500 5 5.500 7.500 5.500 9V14.500L9.500 15.500V9C9.500 7.500 14.500 5 14.500 3Z" fill="#aaa6c4" stroke="#6e6990" strokeWidth="0.800" />
                    <ellipse cx="7.500" cy="3" rx="7" ry="2.500" fill="#e5e3f0" stroke="#6e6990" strokeWidth="0.800" />
                </svg>
                <span>: 0 / 1</span>
            </div>
            <a href="https://www.rbcce.com" className="ml-[60px] mr-[19px] text-[#0000e8] underline">Https://www.rbcce.com</a>
        </footer>
    );
}

export default function App() {
    return (
        <div className="min-h-screen flex flex-col bg-white px-px pt-px pb-0.5 text-[15px] text-[#14207c] font-['Noto_Sans','Noto_Sans_CJK_SC',sans-serif]">
            <div className="relative flex-1 flex flex-col border border-[#3f68b5] rounded-[6px] bg-[#9cc0ee]">
                <AppLogo />
                <TitleBar />
                <div className="flex-1 flex flex-col px-1 pb-[3px]">
                    <TabBar />
                    <Ribbon />
                    <main className="flex-1 flex mt-0.5 border-t border-[#a9c4e6] bg-[#e3edff]">
                        <Sidebar />
                        <div className="flex-1 min-w-0 flex flex-col ml-[3px] mr-px border-x border-[#a9c4e6]">
                            <Canvas />
                            <CommandPanel />
                        </div>
                    </main>
                    <StatusBar />
                </div>
            </div>
        </div>
    );
}
